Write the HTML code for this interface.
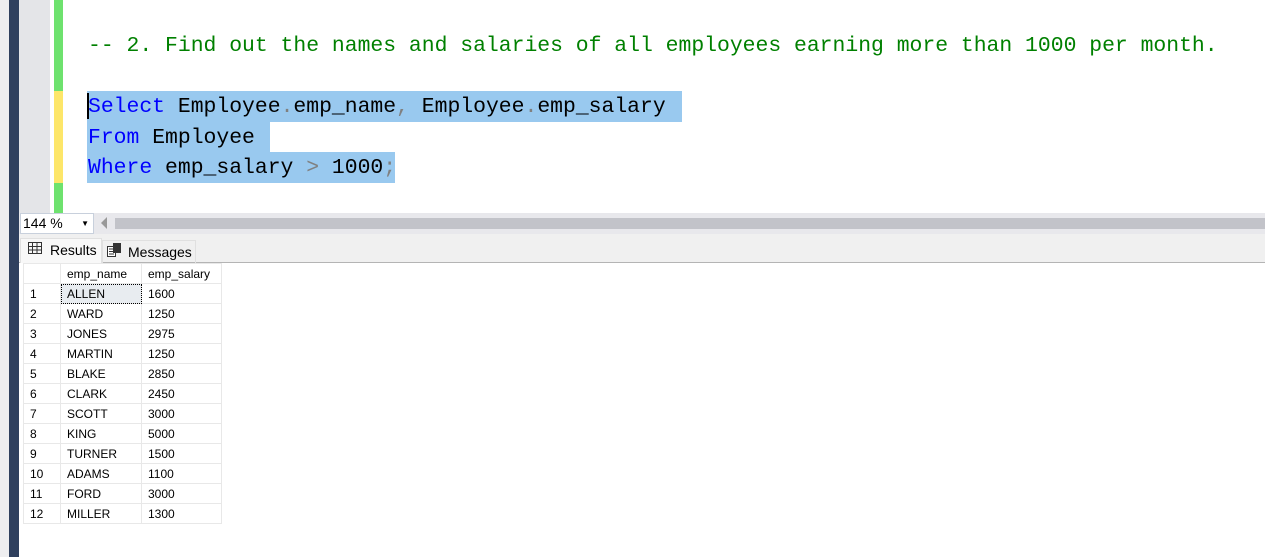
<!DOCTYPE html>
<html><head><style>
*{margin:0;padding:0;box-sizing:border-box}
body{width:1265px;height:557px;overflow:hidden;background:#fff;position:relative;font-family:"Liberation Sans",sans-serif}
.a{position:absolute}
.code{font-family:"Liberation Mono","DejaVu Sans Mono",monospace;font-size:21.4px;white-space:pre;line-height:30px}
.k{color:#0000ff}.g{color:#808080}.c{color:#008000}
.sel{background:#99c9ef}
table{border-collapse:collapse;font-size:12px;color:#000}
td{height:20px;border:1px solid #e8e8e8;padding:0 0 0 6px;vertical-align:middle}
</style></head><body>
<div class="a" style="left:0;top:0;width:9px;height:557px;background:#eeeef0"></div>
<div class="a" style="left:9px;top:0;width:10px;height:557px;background:#2f405e"></div>
<div class="a" style="left:19px;top:0;width:31px;height:213px;background:#e4e5e8"></div>
<div class="a" style="left:54px;top:0;width:9px;height:91px;background:#6ee26e"></div>
<div class="a" style="left:54px;top:91px;width:9px;height:92px;background:#fde669"></div>
<div class="a" style="left:54px;top:183px;width:9px;height:30px;background:#6ee26e"></div>

<div class="a code c" style="left:88px;top:31px">-- 2. Find out the names and salaries of all employees earning more than 1000 per month.</div>
<div class="a sel" style="left:87px;top:91px;width:595px;height:31px"></div>
<div class="a sel" style="left:87px;top:122px;width:183px;height:30px"></div>
<div class="a sel" style="left:87px;top:152px;width:308px;height:31px"></div>
<div class="a" style="left:87px;top:93px;width:2px;height:26px;background:#000"></div>
<div class="a code" style="left:88px;top:92px"><span class="k">Select</span> Employee<span class="g">.</span>emp_name<span class="g">,</span> Employee<span class="g">.</span>emp_salary</div>
<div class="a code" style="left:88px;top:123px"><span class="k">From</span> Employee</div>
<div class="a code" style="left:88px;top:153px"><span class="k">Where</span> emp_salary <span class="g">&gt;</span> 1000<span class="g">;</span></div>

<div class="a" style="left:19px;top:213px;width:1246px;height:21px;background:#e8e8ec"></div>
<div class="a" style="left:20px;top:213px;width:74px;height:21px;background:#fff;border:1px solid #c8d0dc;font-size:14px;line-height:19px;padding-left:2px">144 %<span style="position:absolute;right:4px;top:0;font-size:8px">▼</span></div>
<div class="a" style="left:101px;top:217px;width:0;height:0;border-top:6px solid transparent;border-bottom:6px solid transparent;border-right:6px solid #999"></div>
<div class="a" style="left:115px;top:218px;width:1150px;height:11px;background:#c2c3c9"></div>

<div class="a" style="left:19px;top:234px;width:1246px;height:29px;background:#f0f0f0;border-bottom:1px solid #b4b4b4"></div>
<div class="a" style="left:20px;top:238px;width:82px;height:25px;background:#f8f8f8;border:1px solid #e0e0e0;border-bottom:none;font-size:14px;line-height:22px;padding-left:29px">Results</div>
<svg class="a" style="left:28px;top:242px" width="15" height="13"><rect x="0.5" y="0.5" width="13" height="11" fill="none" stroke="#333"/><path d="M0 4.5H14M0 8H14M4.5 0V12M9 0V12" stroke="#333"/></svg>
<div class="a" style="left:102px;top:240px;width:94px;height:23px;border:1px solid #e0e0e0;border-bottom:none;font-size:14px;line-height:22px;padding-left:25px">Messages</div>
<svg class="a" style="left:107px;top:243px" width="15" height="14"><rect x="0.5" y="3.5" width="8" height="10" fill="#fff" stroke="#333"/><rect x="6" y="0" width="8" height="10" fill="#333"/><path d="M2 6H7M2 8.5H7M2 11H7" stroke="#333"/></svg>

<table class="a" style="left:23px;top:263px">
<tr style="height:20px"><td style="width:37px;height:19px"></td><td style="width:81px">emp_name</td><td style="width:80px">emp_salary</td></tr>
<tr><td>1</td><td style="background:#e8ecf0;outline:1px dotted #000;outline-offset:-1px">ALLEN</td><td>1600</td></tr>
<tr><td>2</td><td>WARD</td><td>1250</td></tr>
<tr><td>3</td><td>JONES</td><td>2975</td></tr>
<tr><td>4</td><td>MARTIN</td><td>1250</td></tr>
<tr><td>5</td><td>BLAKE</td><td>2850</td></tr>
<tr><td>6</td><td>CLARK</td><td>2450</td></tr>
<tr><td>7</td><td>SCOTT</td><td>3000</td></tr>
<tr><td>8</td><td>KING</td><td>5000</td></tr>
<tr><td>9</td><td>TURNER</td><td>1500</td></tr>
<tr><td>10</td><td>ADAMS</td><td>1100</td></tr>
<tr><td>11</td><td>FORD</td><td>3000</td></tr>
<tr><td>12</td><td>MILLER</td><td>1300</td></tr>
</table>
</body></html>
